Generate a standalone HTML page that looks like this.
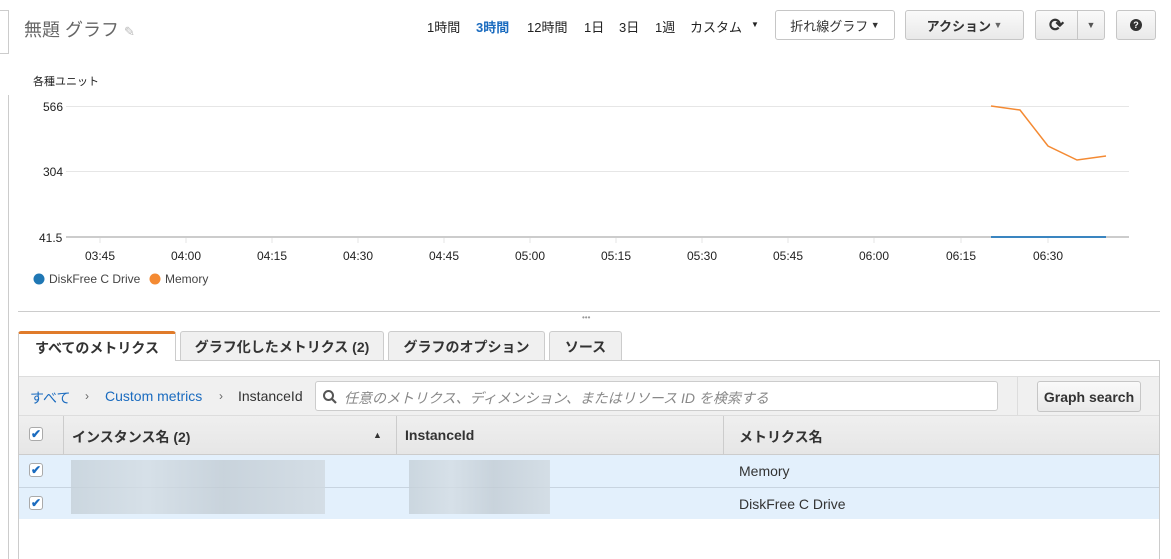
<!DOCTYPE html>
<html><head><meta charset="utf-8"><style>
*{box-sizing:border-box;margin:0;padding:0}
body{width:1171px;height:559px;overflow:hidden;background:#fff;font-family:"Liberation Sans","Noto Sans CJK JP",sans-serif;color:#222;position:relative}
.a{position:absolute;white-space:nowrap}
.btn{position:absolute;border:1px solid #c6c6c6;border-radius:3px;background:linear-gradient(#fafafa,#e9e9e9);font-size:13px;font-weight:bold;color:#333;display:flex;align-items:center;justify-content:center}
.tab{position:absolute;top:331px;height:30px;border:1px solid #ccc;border-bottom:none;background:#f0f0f0;font-size:14px;font-weight:bold;color:#333;display:flex;align-items:center;justify-content:center;border-radius:3px 3px 0 0}
.cb{position:absolute;width:14px;height:14px;border:1px solid #aaa;border-radius:3px;background:#fff;color:#1a6bbf;font-size:12px;line-height:12px;text-align:center;font-weight:bold}
.blur{position:absolute;background:linear-gradient(90deg,#c5d0d8,#d3dce3 30%,#c2ccd4 60%,#d0d9e0);}
.tick{font-size:12px;color:#222}
.tr{position:absolute;top:17px;font-size:13px}
.bc{position:absolute;top:388px;font-size:14px;color:#1a6bbf}
.sep{position:absolute;top:389px;font-size:12px;color:#666}
</style></head><body>
<div class="a" style="left:0;top:10px;width:9px;height:44px;border:1px solid #ccc;border-left:none"></div>
<div class="a" style="left:8px;top:95px;width:1px;height:464px;background:#ccc"></div>
<div class="a" style="left:24px;top:16px;font-size:18px;color:#666">無題 グラフ <span style="color:#bbb;font-size:13px">✎</span></div>
<div class="tr" style="left:427px">1時間</div>
<div class="tr" style="left:476px;color:#1a6bbf;font-weight:bold">3時間</div>
<div class="tr" style="left:527px">12時間</div>
<div class="tr" style="left:584px">1日</div>
<div class="tr" style="left:619px">3日</div>
<div class="tr" style="left:655px">1週</div>
<div class="tr" style="left:690px">カスタム</div>
<div class="tr" style="left:751px;top:20px;font-size:8px">▼</div>
<div class="btn" style="left:775px;top:10px;width:120px;height:30px;background:#fff;font-weight:normal">折れ線グラフ <span style="font-size:9px">&nbsp;▼</span></div>
<div class="btn" style="left:905px;top:10px;width:119px;height:30px">アクション <span style="font-size:9px;color:#666">&nbsp;▼</span></div>
<div class="btn" style="left:1035px;top:10px;width:43px;height:30px;border-radius:3px 0 0 3px;font-size:18px">⟳</div>
<div class="btn" style="left:1077px;top:10px;width:28px;height:30px;border-radius:0 3px 3px 0;font-size:9px;color:#555">▼</div>
<div class="btn" style="left:1116px;top:10px;width:40px;height:30px"><span style="display:inline-block;width:12px;height:12px;border-radius:50%;background:#333;color:#fff;font-size:9px;line-height:12px;text-align:center">?</span></div>
<div class="a" style="left:33px;top:73px;font-size:11px">各種ユニット</div>
<div class="a tick" style="left:43px;top:100px">566</div>
<div class="a tick" style="left:43px;top:165px">304</div>
<div class="a tick" style="left:39px;top:231px">41.5</div>
<svg class="a" style="left:0;top:0" width="1171" height="300">
<line x1="66" y1="106.5" x2="1129" y2="106.5" stroke="#e6e6e6"/>
<line x1="66" y1="171.5" x2="1129" y2="171.5" stroke="#e6e6e6"/>
<line x1="66" y1="237" x2="1129" y2="237" stroke="#ccc" stroke-width="2"/>
<line x1="991" y1="237" x2="1106" y2="237" stroke="#3a85c0" stroke-width="2"/>
<polyline points="991,106 1020,110 1048,146 1077,160 1106,156" fill="none" stroke="#f48a33" stroke-width="1.5"/>
<g stroke="#e6e6e6"><line x1="100" y1="238" x2="100" y2="243"/><line x1="186" y1="238" x2="186" y2="243"/><line x1="272" y1="238" x2="272" y2="243"/><line x1="358" y1="238" x2="358" y2="243"/><line x1="444" y1="238" x2="444" y2="243"/><line x1="530" y1="238" x2="530" y2="243"/><line x1="616" y1="238" x2="616" y2="243"/><line x1="702" y1="238" x2="702" y2="243"/><line x1="788" y1="238" x2="788" y2="243"/><line x1="874" y1="238" x2="874" y2="243"/><line x1="961" y1="238" x2="961" y2="243"/><line x1="1048" y1="238" x2="1048" y2="243"/></g>
<g font-family="Liberation Sans,sans-serif" font-size="12" fill="#222" text-anchor="middle"><text x="100" y="260">03:45</text><text x="186" y="260">04:00</text><text x="272" y="260">04:15</text><text x="358" y="260">04:30</text><text x="444" y="260">04:45</text><text x="530" y="260">05:00</text><text x="616" y="260">05:15</text><text x="702" y="260">05:30</text><text x="788" y="260">05:45</text><text x="874" y="260">06:00</text><text x="961" y="260">06:15</text><text x="1048" y="260">06:30</text></g>
<circle cx="39" cy="279" r="5.5" fill="#1f77b4"/><circle cx="155" cy="279" r="5.5" fill="#f48a33"/>
<g font-family="Liberation Sans,sans-serif" font-size="12" fill="#444"><text x="49" y="283">DiskFree C Drive</text><text x="165" y="283">Memory</text></g>
</svg>
<div class="a" style="left:18px;top:311px;width:1142px;height:1px;background:#ccc"></div>
<div class="a" style="left:582px;top:313px;font-size:8px;color:#999">•••</div>
<div class="tab" style="left:18px;width:158px;background:#fff;border-top:3px solid #e07b2a">すべてのメトリクス</div>
<div class="tab" style="left:180px;width:204px">グラフ化したメトリクス (2)</div>
<div class="tab" style="left:388px;width:157px">グラフのオプション</div>
<div class="tab" style="left:549px;width:73px">ソース</div>
<div class="a" style="left:176px;top:360px;width:984px;height:1px;background:#ccc"></div>
<div class="a" style="left:18px;top:360px;width:1px;height:199px;background:#ccc"></div>
<div class="a" style="left:1159px;top:360px;width:1px;height:199px;background:#ccc"></div>
<div class="a" style="left:19px;top:376px;width:1140px;height:40px;background:#f0f0f0;border-top:1px solid #ddd;border-bottom:1px solid #ddd"></div>
<div class="bc" style="left:30px">すべて</div>
<div class="sep" style="left:85px">›</div>
<div class="bc" style="left:105px">Custom metrics</div>
<div class="sep" style="left:219px">›</div>
<div class="bc" style="left:238px;color:#333">InstanceId</div>
<div class="a" style="left:315px;top:381px;width:683px;height:30px;background:#fff;border:1px solid #ccc;border-radius:3px"></div>
<svg class="a" style="left:322px;top:389px" width="16" height="16"><circle cx="6.5" cy="6.5" r="4.5" fill="none" stroke="#555" stroke-width="2"/><line x1="10" y1="10" x2="14" y2="14" stroke="#555" stroke-width="2.2"/></svg>
<div class="a" style="left:344px;top:388px;font-size:14px;color:#888;font-style:italic">任意のメトリクス、ディメンション、またはリソース ID を検索する</div>
<div class="a" style="left:1017px;top:377px;width:1px;height:38px;background:#ddd"></div>
<div class="btn" style="left:1037px;top:381px;width:104px;height:31px;font-size:14px">Graph search</div>
<div class="a" style="left:19px;top:416px;width:1140px;height:39px;background:linear-gradient(#efefef,#e6e6e6);border-bottom:1px solid #ccc"></div>
<div class="a" style="left:63px;top:416px;width:1px;height:39px;background:#ccc"></div>
<div class="a" style="left:396px;top:416px;width:1px;height:39px;background:#ccc"></div>
<div class="a" style="left:723px;top:416px;width:1px;height:39px;background:#ccc"></div>
<div class="cb" style="left:29px;top:427px">✔</div>
<div class="a" style="left:72px;top:427px;font-size:14px;font-weight:bold;color:#333">インスタンス名 (2)</div>
<div class="a" style="left:373px;top:430px;font-size:9px;color:#333">▲</div>
<div class="a" style="left:405px;top:427px;font-size:14px;font-weight:bold;color:#333">InstanceId</div>
<div class="a" style="left:739px;top:427px;font-size:14px;font-weight:bold;color:#333">メトリクス名</div>
<div class="a" style="left:19px;top:455px;width:1140px;height:64px;background:#e3f0fc"></div>
<div class="a" style="left:19px;top:487px;width:1140px;height:1px;background:#c8d4e0"></div>
<div class="cb" style="left:29px;top:463px">✔</div>
<div class="cb" style="left:29px;top:496px">✔</div>
<div class="blur" style="left:71px;top:460px;width:254px;height:54px;opacity:.8"></div>
<div class="blur" style="left:409px;top:460px;width:141px;height:54px;opacity:.8"></div>
<div class="a" style="left:739px;top:463px;font-size:14px;color:#333">Memory</div>
<div class="a" style="left:739px;top:496px;font-size:14px;color:#333">DiskFree C Drive</div>
</body></html>
